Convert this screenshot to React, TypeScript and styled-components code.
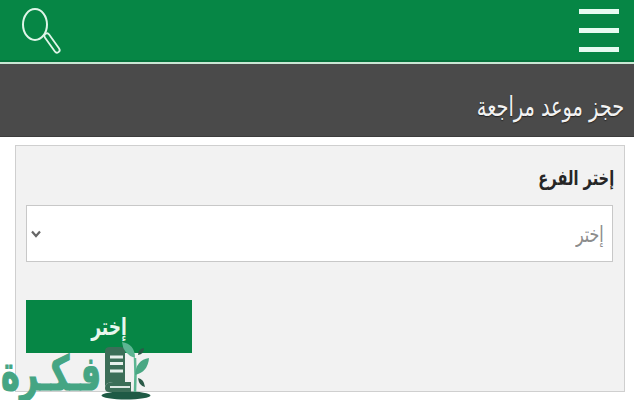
import React from 'react';
import styled, { createGlobalStyle } from 'styled-components';

const Global = createGlobalStyle`
  html, body {
    margin: 0;
    background: #fff;
    font-family: "DejaVu Sans", "Noto Sans", sans-serif;
  }
`;

const Page = styled.div`
  position: relative;
  width: 634px;
  height: 400px;
  overflow: hidden;
  background: #fff;
`;

const TopBar = styled.header`
  display: flex;
  align-items: center;
  justify-content: space-between;
  box-sizing: border-box;
  height: 64px;
  padding: 0 15px 2px 21px;
  background: #068645;
  border-bottom: 2px solid #c9e6d3;
  box-shadow: inset 0 -2px 0 #05733c;
`;

const IconButton = styled.button`
  display: block;
  padding: 0;
  border: 0;
  background: none;
  line-height: 0;
`;

const Burger = styled.div`
  display: flex;
  flex-direction: column;
  gap: 14px;
  width: 40px;
`;

const BurgerLine = styled.span`
  display: block;
  height: 5px;
  background: #e6fbf1;
`;

const TitleBar = styled.div`
  display: flex;
  align-items: center;
  justify-content: flex-end;
  box-sizing: border-box;
  height: 73px;
  padding: 14px 10px 0 0;
  background: #4a4a4a;
  border-bottom: 1px solid #3c3c3c;
`;

// the reference's Arabic face is narrower and taller than DejaVu
const Squeezed = styled.span<{ $sx: number; $sy: number; $origin?: string }>`
  display: inline-block;
  transform: scale(${(p) => p.$sx}, ${(p) => p.$sy});
  transform-origin: ${(p) => p.$origin ?? 'right center'};
  white-space: nowrap;
`;

const Title = styled.h1`
  margin: 0;
  font-size: 21px;
  font-weight: 400;
  line-height: 30px;
  color: #f2f2f2;
  text-shadow: 0 1px 1px #222;
`;

const Panel = styled.main`
  box-sizing: border-box;
  width: 610px;
  height: 247px;
  margin: 8px 0 0 15px;
  padding: 19px 10px 0;
  background: #f2f2f2;
  border: 1px solid #cfcfcf;
`;

const Label = styled.label`
  display: block;
  height: 40px;
  font-size: 17px;
  font-weight: 700;
  line-height: 26px;
  color: #262626;
  text-align: right;
`;

const SelectBox = styled.div`
  display: flex;
  align-items: center;
  justify-content: space-between;
  box-sizing: border-box;
  width: 587px;
  height: 57px;
  padding: 0 8px 0 4px;
  background: #fff;
  border: 1px solid #c8c8c8;
`;

const Placeholder = styled.span`
  font-size: 17px;
  color: #8c8c8c;
`;

const SubmitButton = styled.button`
  display: block;
  width: 166px;
  height: 53px;
  margin-top: 38px;
  border: 0;
  background: #068645;
  color: #e8f7ee;
  font-family: inherit;
  font-size: 17px;
  font-weight: 700;
`;

const Watermark = styled.div`
  position: absolute;
  left: 0;
  bottom: 0;
  display: flex;
  align-items: flex-end;
  height: 62px;
`;

const WatermarkText = styled.span`
  display: inline-block;
  width: 101px;
  margin-bottom: 4px;
  font-size: 40px;
  line-height: 46px;
  font-weight: 700;
  color: #45a583;
  -webkit-text-stroke: 1px #45a583;
`;

const SearchIcon = () => (
  <svg width="40" height="48" viewBox="0 0 40 48" fill="none" strokeLinecap="round">
    <ellipse cx="14" cy="18.5" rx="12" ry="15.5" stroke="#dff5e8" strokeWidth="2" />
    <path d="M26 30 L36 44" stroke="#dff5e8" strokeWidth="7" />
    <path d="M26 30 L36 44" stroke="#068645" strokeWidth="3.4" />
  </svg>
);

const Chevron = () => (
  <svg width="10" height="8" viewBox="0 0 10 8" fill="none" stroke="#666" strokeWidth="2.2">
    <path d="M1 1.5 L5 6 L9 1.5" />
  </svg>
);

const LogoMark = () => (
  <svg width="50" height="62" viewBox="0 0 50 62">
    <ellipse cx="25" cy="57.5" rx="24.5" ry="4" fill="#1f5a45" />
    <path d="M4 13 Q4 9 9 9 L19 9 Q24 9 24 13 L24 44 L12 44 Q4 44 4 50 Z" fill="#3c6e58" />
    <path d="M4 50 Q4 44 12 44 L30 44 L30 54 L8 54 Q4 54 4 50 Z" fill="#3c6e58" />
    <path d="M9 19h13M9 25.5h13M9 33h13" stroke="#e8f0ec" strokeWidth="3" />
    <path d="M9 49h20" stroke="#dce8e2" strokeWidth="2" />
    <path d="M34 54 Q35 36 34 20" stroke="#5cb592" strokeWidth="2.5" fill="none" />
    <path d="M34 20 Q22 16 21 4 Q34 6 34 20 Z" fill="#5cb592" />
    <path d="M34 37 Q35 22 48 20 Q47 34 34 37 Z" fill="#4aa884" />
    <path d="M37 17 Q37 11 43 10 Q43 16 37 17 Z" fill="#2b5a48" />
    <path d="M37 40 Q43 41 44 49 Q38 48 37 40 Z" fill="#2b5a48" />
  </svg>
);

export default function App() {
  return (
    <Page dir="ltr">
      <Global />
      <TopBar>
        <IconButton aria-label="search">
          <SearchIcon />
        </IconButton>
        <Burger>
          <BurgerLine />
          <BurgerLine />
          <BurgerLine />
        </Burger>
      </TopBar>
      <TitleBar>
        <Title dir="rtl">
          <Squeezed $sx={0.92} $sy={1.3}>حجز موعد مراجعة</Squeezed>
        </Title>
      </TitleBar>
      <Panel>
        <Label dir="rtl">
          <Squeezed $sx={0.86} $sy={1.2}>إختر الفرع</Squeezed>
        </Label>
        <SelectBox>
          <Chevron />
          <Placeholder dir="rtl">
            <Squeezed $sx={0.93} $sy={1.3}>إختر</Squeezed>
          </Placeholder>
        </SelectBox>
        <SubmitButton dir="rtl">
          <Squeezed $sx={1} $sy={1.4} $origin="center">إختر</Squeezed>
        </SubmitButton>
      </Panel>
      <Watermark>
        <WatermarkText dir="rtl">
          <Squeezed $sx={0.8} $sy={1.2}>فـكـرة</Squeezed>
        </WatermarkText>
        <LogoMark />
      </Watermark>
    </Page>
  );
}
